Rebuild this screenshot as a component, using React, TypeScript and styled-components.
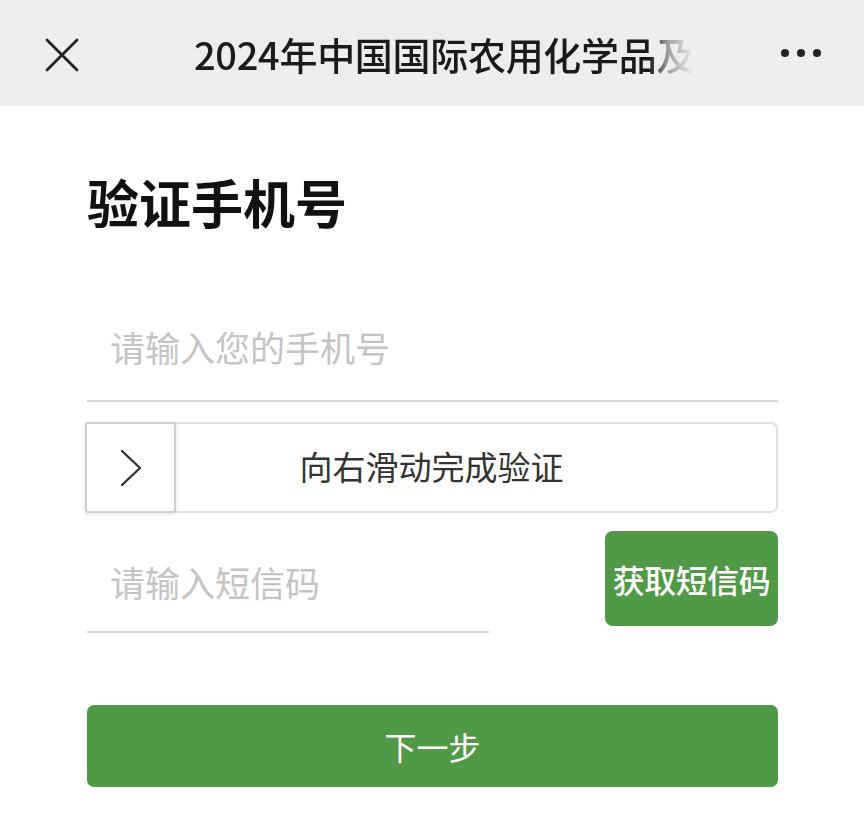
import React from 'react';
import styled, { createGlobalStyle } from 'styled-components';

const GlobalStyle = createGlobalStyle`
  html, body {
    margin: 0;
    padding: 0;
    background: #ffffff;
    font-family: "Noto Sans CJK SC", "Noto Sans", sans-serif;
  }
`;

const App = () => {
  return (
    <Page>
      <GlobalStyle />
      <TopBar>
        <IconButton aria-label="close">
          <svg width="34" height="34" viewBox="0 0 34 34">
            <path d="M2 2 L32 32 M32 2 L2 32" stroke="#222" strokeWidth="2.8" strokeLinecap="round" />
          </svg>
        </IconButton>
        <BarTitle>2024年中国国际农用化学品及</BarTitle>
        <MoreButton aria-label="more">
          <Dot />
          <Dot />
          <Dot />
        </MoreButton>
      </TopBar>

      <Content>
        <Heading>验证手机号</Heading>

        <Field>
          <Input placeholder="请输入您的手机号" />
        </Field>

        <Slider>
          <SliderText>向右滑动完成验证</SliderText>
          <Handle>
            <svg width="28" height="40" viewBox="0 0 28 40">
              <path d="M5 3 L23 20 L5 37" fill="none" stroke="#333" strokeWidth="2.4" strokeLinecap="round" strokeLinejoin="round" />
            </svg>
          </Handle>
        </Slider>

        <CodeRow>
          <Field $width="402px" $height="102px">
            <Input placeholder="请输入短信码" />
          </Field>
          <SmsButton>获取短信码</SmsButton>
        </CodeRow>

        <NextButton>下一步</NextButton>
      </Content>
    </Page>
  );
};

export default App;

const green = '#4f9947';

const Page = styled.div`
  width: 864px;
  min-height: 826px;
  background: #fff;
`;

const TopBar = styled.div`
  height: 106px;
  background: #ededed;
  display: flex;
  align-items: center;
  padding: 0 43px 0 45px;
  box-sizing: border-box;
`;

const IconButton = styled.div`
  width: 34px;
  height: 34px;
  display: flex;
  align-items: center;
  justify-content: center;
  margin-top: 4px;
`;

const BarTitle = styled.div`
  margin-left: 115px;
  font-size: 38px;
  font-weight: 500;
  color: #1a1a1a;
  white-space: nowrap;
  letter-spacing: -0.3px;
  -webkit-mask-image: linear-gradient(to right, #000 0, #000 91%, rgba(0, 0, 0, 0.35) 95%, transparent 100%);
  mask-image: linear-gradient(to right, #000 0, #000 91%, rgba(0, 0, 0, 0.35) 95%, transparent 100%);
`;

const MoreButton = styled.div`
  margin-left: auto;
  display: flex;
  gap: 8px;
  align-items: center;
`;

const Dot = styled.span`
  width: 8px;
  height: 8px;
  border-radius: 50%;
  background: #222;
`;

const Content = styled.div`
  padding: 66px 86px 0 87px;
  display: flex;
  flex-direction: column;
`;

const Heading = styled.h1`
  margin: 0;
  font-size: 52px;
  line-height: 60px;
  font-weight: 700;
  color: #111;
`;

const Field = styled.div<{ $width?: string; $height?: string }>`
  width: ${({ $width }) => $width || '100%'};
  height: ${({ $height }) => $height || '103px'};
  border-bottom: 2px solid #d6d6d6;
  display: flex;
  align-items: center;
  box-sizing: border-box;
  margin-top: ${({ $height }) => ($height ? '0' : '67px')};
  padding-bottom: ${({ $height }) => ($height ? '0' : '6px')};
`;

const Input = styled.input`
  border: none;
  outline: none;
  background: transparent;
  width: 100%;
  padding: 0 0 0 23px;
  font-family: "Noto Sans CJK SC", "Noto Sans", sans-serif;
  font-size: 35px;
  color: #333;
  &::placeholder {
    color: #c4c4c4;
  }
`;

const Slider = styled.div`
  margin-top: 20px;
  height: 91px;
  border: 2px solid #e2e2e2;
  border-radius: 7px;
  display: grid;
  grid-template-areas: 'track';
  box-sizing: border-box;
  margin-left: -2px;
`;

const Handle = styled.div`
  grid-area: track;
  justify-self: start;
  width: 91px;
  margin: -2px 0 -2px -2px;
  border: 2px solid #cfcfcf;
  border-radius: 3px;
  background: #fff;
  box-shadow: 0 1px 4px rgba(0, 0, 0, 0.12);
  display: flex;
  align-items: center;
  justify-content: center;
  box-sizing: border-box;
`;

const SliderText = styled.div`
  grid-area: track;
  display: flex;
  align-items: center;
  justify-content: center;
  font-size: 33px;
  color: #333;
  margin-top: -4px;
`;

const CodeRow = styled.div`
  margin-top: 18px;
  display: flex;
  justify-content: space-between;
  align-items: flex-start;
`;

const SmsButton = styled.div`
  width: 173px;
  height: 95px;
  border-radius: 8px;
  background: ${green};
  color: #fff;
  font-size: 32px;
  font-weight: 500;
  display: flex;
  align-items: center;
  justify-content: center;
  white-space: nowrap;
  letter-spacing: -0.5px;
`;

const NextButton = styled.div`
  margin-top: 72px;
  height: 82px;
  border-radius: 7px;
  background: ${green};
  color: #fff;
  font-size: 32px;
  display: flex;
  align-items: center;
  justify-content: center;
`;
